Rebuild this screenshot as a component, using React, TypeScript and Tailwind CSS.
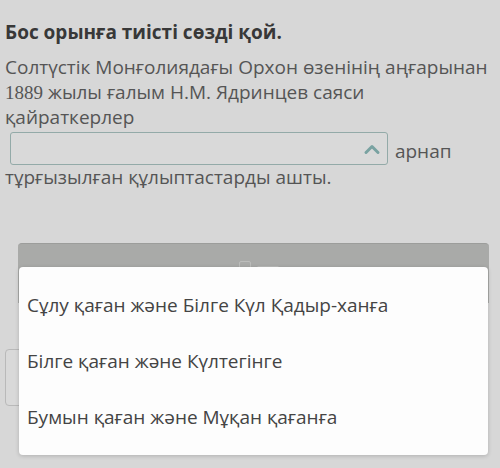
import React from "react";

export default function App() {
  const font = { fontFamily: '"Open Sans", "Noto Sans", sans-serif' };
  return (
    <div
      className="relative w-[500px] h-[468px] overflow-hidden bg-[#d7d7d7]"
      style={font}
    >
      <div className="pl-[5px] pr-[8px] pt-[19px]">
        <h1 className="text-[19px] leading-[26px] font-bold text-[#383838]">
          Бос орынға тиісті сөзді қой.
        </h1>
        <p className="mt-[10px] text-[19px] leading-[25px] text-[#555555]">
          Солтүстік Монғолиядағы Орхон өзенінің аңғарынан{" "}
          <span style={{ fontFamily: '"Liberation Serif", serif' }}>1889</span>{" "}
          жылы ғалым Н.М. Ядринцев саяси қайраткерлер{" "}
          <span
            className="inline-block overflow-hidden ml-[5px] mr-[2px] mt-[2px] w-[378px] h-[33px] rounded-[3px] border border-[#93aaa8] bg-[#d9d9d9]"
            style={{ verticalAlign: "-7px" }}
          >
            <span className="flex h-full items-center justify-end pr-[6px]">
              <svg width="18" height="12" viewBox="0 0 18 12" fill="none">
                <path d="M3 9.5 L9 3.5 L15 9.5" stroke="#79a2a1" strokeWidth="3" strokeLinecap="round" strokeLinejoin="round" />
              </svg>
            </span>
          </span>{" "}
          арнап тұрғызылған құлыптастарды ашты.
        </p>
        <div className="mt-[159px] w-[40px] h-[57px] rounded-[4px] border border-[#b9b9b9] bg-[#d9d9d9]" />
      </div>

      <div className="absolute left-[18px] top-[243px] w-[471px] flex flex-col">
        <div className="h-[60px] rounded-t-[4px] bg-[#a9aaa8] border-t border-[#9c9d9b] flex justify-center items-start pt-[17px] gap-[6px] pl-[10px]">
          <div className="w-[12px] h-[8px] rounded-[2px] border border-[#c4c5c3] opacity-70" />
          <div className="mt-[5px] w-[22px] h-[3px] rounded bg-[#c4c5c3] opacity-60" />
        </div>
        <div className="relative -mt-[36px] mx-[1px] h-[188px] rounded-[4px] bg-[#fdfdfd] shadow-[0_1px_4px_rgba(0,0,0,0.18)] flex flex-col justify-center">
          {[
            "Сұлу қаған және Білге Күл Қадыр-ханға",
            "Білге қаған және Күлтегінге",
            "Бумын қаған және Мұқан қағанға",
          ].map((t) => (
            <div key={t} className="h-[56px] flex items-center pl-[8px] text-[19px] text-[#444444]">
              {t}
            </div>
          ))}
        </div>
      </div>
    </div>
  );
}
